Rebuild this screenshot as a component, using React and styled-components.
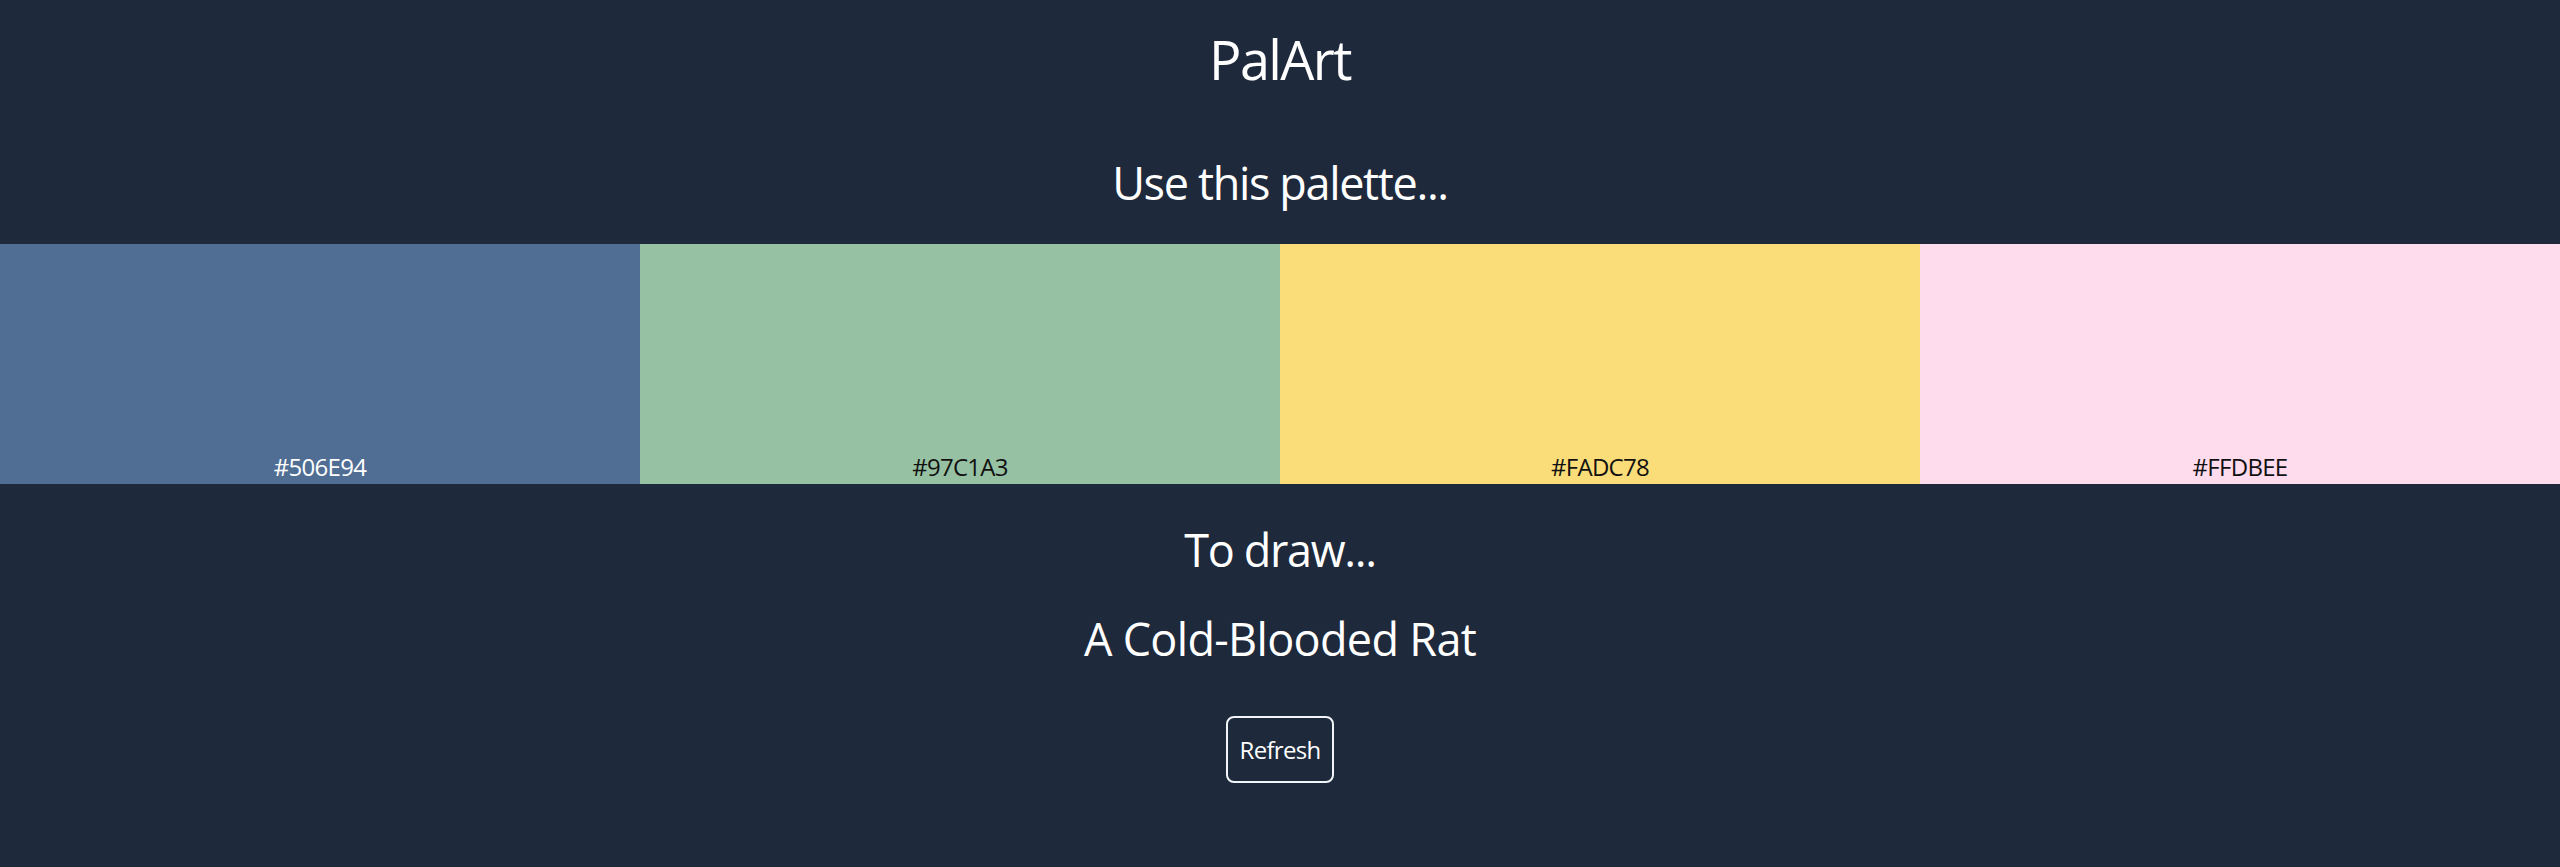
import React from 'react';
import styled, { createGlobalStyle } from 'styled-components';

const GlobalStyle = createGlobalStyle`
  html, body {
    margin: 0;
    padding: 0;
    background-color: #1e293b;
  }
  body {
    font-family: 'Open Sans', 'Noto Sans', sans-serif;
    color: #ffffff;
  }
`;

const Page = styled.main`
  display: flex;
  flex-direction: column;
  align-items: center;
  min-height: 867px;
  background-color: #1e293b;
  padding-top: 27px;
  box-sizing: border-box;
`;

const Title = styled.h1`
  margin: 0;
  font-size: 54px;
  font-weight: 400;
  line-height: 1.2;
  letter-spacing: -0.03em;
`;

const Heading = styled.h2`
  margin: ${(p) => p.$top || 0}px 0 0;
  font-size: 45px;
  font-weight: 400;
  line-height: 1.2;
  letter-spacing: ${(p) => p.$tight ? '-0.03em' : '-0.015em'};
`;

const PaletteRow = styled.div`
  display: grid;
  grid-template-columns: repeat(4, 1fr);
  width: 100%;
  height: 240px;
  margin-top: 34px;
`;

const Swatch = styled.div`
  display: flex;
  align-items: flex-end;
  justify-content: center;
  background-color: ${(p) => p.$color};
  color: ${(p) => (p.$dark ? '#ffffff' : '#111111')};
`;

const HexLabel = styled.span`
  font-size: 24px;
  line-height: 1.4;
  letter-spacing: -0.03em;
`;

const RefreshButton = styled.button`
  margin-top: 50px;
  height: 67px;
  padding: 0 12px;
  background: transparent;
  border: 2px solid #f1f5f9;
  border-radius: 8px;
  color: #ffffff;
  font-family: inherit;
  font-size: 24px;
  letter-spacing: -0.03em;
  cursor: pointer;
`;

const palette = [
  { hex: '#506E94', dark: true },
  { hex: '#97C1A3' },
  { hex: '#FADC78' },
  { hex: '#FFDBEE' },
];

export default function App() {
  return (
    <>
      <GlobalStyle />
      <Page>
        <Title>PalArt</Title>
        <Heading $top={64} $tight>Use this palette...</Heading>
        <PaletteRow>
          {palette.map((c) => (
            <Swatch key={c.hex} $color={c.hex} $dark={c.dark}>
              <HexLabel>{c.hex}</HexLabel>
            </Swatch>
          ))}
        </PaletteRow>
        <Heading $top={39} $tight>To draw...</Heading>
        <Heading $top={35}>A Cold-Blooded Rat</Heading>
        <RefreshButton>Refresh</RefreshButton>
      </Page>
    </>
  );
}
